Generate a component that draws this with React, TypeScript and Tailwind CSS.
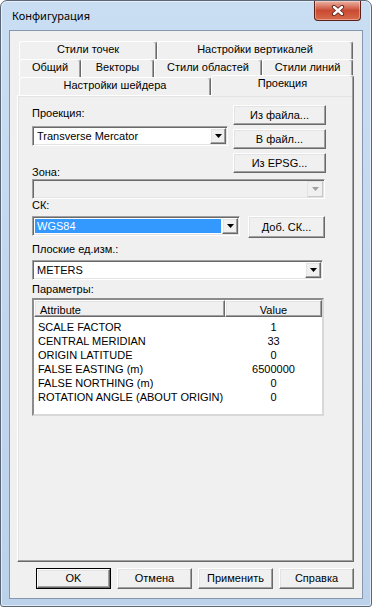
import React from "react";

// classic win32 3d edges
const raised =
  "border border-t-white border-l-white border-r-[#696969] border-b-[#696969] shadow-[inset_-1px_-1px_#a0a0a0,inset_1px_1px_#e3e3e3]";
const sunken =
  "border border-t-[#a0a0a0] border-l-[#a0a0a0] border-r-white border-b-white shadow-[inset_1px_1px_#696969,inset_-1px_-1px_#e3e3e3]";
const tabEdge =
  "border-t border-l border-r border-t-white border-l-white border-r-[#696969] shadow-[inset_-1px_0_#a0a0a0] rounded-t-[3px]";

const params = [
  { name: "SCALE FACTOR", value: "1" },
  { name: "CENTRAL MERIDIAN", value: "33" },
  { name: "ORIGIN LATITUDE", value: "0" },
  { name: "FALSE EASTING (m)", value: "6500000" },
  { name: "FALSE NORTHING (m)", value: "0" },
  { name: "ROTATION ANGLE (ABOUT ORIGIN)", value: "0" },
];

const Tab: React.FC<{ w: string; children: React.ReactNode }> = ({ w, children }) => (
  <div className={`${w} h-[18px] flex justify-center leading-[15px] bg-[#f0f0f0] ${tabEdge}`}>{children}</div>
);

const Btn: React.FC<{ w: string; h?: string; children: React.ReactNode; def?: boolean }> = ({ w, h = "h-[20px]", children, def }) =>
  def ? (
    <div className={`${w} ${h} border border-black flex`}>
      <div className={`flex-1 flex items-center justify-center leading-[13px] bg-[#f0f0f0] ${raised}`}>{children}</div>
    </div>
  ) : (
    <div className={`${w} ${h} flex items-center justify-center leading-[13px] bg-[#f0f0f0] ${raised}`}>{children}</div>
  );

const Arrow: React.FC<{ disabled?: boolean }> = ({ disabled }) => (
  <div
    className={`w-[16px] h-full flex items-center justify-center bg-[#f0f0f0] ${
      disabled ? "border border-t-[#e3e3e3] border-l-[#e3e3e3] border-r-[#c8c8c8] border-b-[#c8c8c8]" : raised
    }`}
  >
    <svg width="7" height="4" viewBox="0 0 7 4">
      <polygon points="0,0 7,0 3.5,4" fill={disabled ? "#a0a0a0" : "#000"} />
    </svg>
  </div>
);

const Combo: React.FC<{ w: string; value?: string; selected?: boolean; disabled?: boolean }> = ({ w, value, selected, disabled }) => (
  <div className={`${w} h-[20px] flex p-[1px] ${sunken} ${disabled ? "bg-[#f0f0f0]" : "bg-white"}`}>
    <div className="flex-1 flex leading-[13px]">
      {selected ? (
        <span className="flex-1 m-[1px] pl-[2px] flex items-center bg-[#3399ff] text-white">{value}</span>
      ) : (
        <span className="pl-[3px] flex items-center">{value}</span>
      )}
    </div>
    <Arrow disabled={disabled} />
  </div>
);

const Label: React.FC<{ children: React.ReactNode; className?: string }> = ({ children, className = "" }) => (
  <div className={`h-[13px] leading-[13px] ${className}`}>{children}</div>
);

export default function App() {
  return (
    <div className="w-[372px] h-[607px] flex flex-col px-[8px] pb-[7px] border border-[#5b6776] rounded-t-[7px] rounded-b-[3px] bg-linear-to-b from-[#cadef3] via-[#c2d7ee] to-[#bcd2eb] shadow-[inset_0_0_0_1px_rgba(255,255,255,0.55)] text-black font-['Liberation_Sans',Arial,sans-serif] text-[11px]">
      {/* title bar */}
      <div className="h-[29px] flex">
        <div className="pl-[3px] pt-[7px] text-[11px] leading-[16px] text-[#000] font-['Noto_Sans',sans-serif]">Конфигурация</div>
        <div className="ml-auto mr-[2px] w-[47px] h-[20px] rounded-b-[4px] border border-t-0 border-[#5a2118] bg-linear-to-b from-[#eab2a5] via-[#c94a32] to-[#d86a4a] shadow-[inset_0_0_0_1px_rgba(255,255,255,0.35)] flex items-center justify-center">
          <svg width="14" height="11" viewBox="0 0 14 11">
            <path d="M3 2 L11 9 M11 2 L3 9" stroke="#5b241a" strokeWidth="4.2" strokeLinecap="round" />
            <path d="M3 2 L11 9 M11 2 L3 9" stroke="#fff" strokeWidth="2.4" strokeLinecap="round" />
          </svg>
        </div>
      </div>

      {/* client area */}
      <div className="flex-1 flex flex-col border border-[#8497ae] bg-[#f0f0f0] pt-[10px] pl-[7px] pr-[8px] pb-[9px]">
        {/* tabs */}
        <div className="ml-[2px] flex flex-col">
          <div className="flex h-[18px]">
            <Tab w="w-[138px]">Стили точек</Tab>
            <Tab w="w-[196px]">Настройки вертикалей</Tab>
          </div>
          <div className="flex h-[18px]">
            <Tab w="w-[62px]">Общий</Tab>
            <Tab w="w-[73px]">Векторы</Tab>
            <Tab w="w-[108px]">Стили областей</Tab>
            <Tab w="w-[91px]">Стили линий</Tab>
          </div>
          <div className="flex h-[18px]">
            <Tab w="w-[192px]">Настройки шейдера</Tab>
            <div className={`relative z-10 w-[143px] h-[21px] -mt-[2px] flex justify-center leading-[15px] bg-[#f0f0f0] ${tabEdge}`}>Проекция</div>
          </div>
        </div>

        {/* page */}
        <div className={`flex-1 flex flex-col pl-[14px] pt-[9px] bg-[#f0f0f0] ${raised}`}>
          <div className="flex gap-[5px]">
            <div className="w-[196px] flex flex-col">
              <Label className="mt-[2px]">Проекция:</Label>
              <div className="mt-[6px]">
                <Combo w="w-[196px]" value="Transverse Mercator" />
              </div>
              <Label className="mt-[20px]">Зона:</Label>
            </div>
            <div className="w-[93px] flex flex-col gap-[4px]">
              <Btn w="w-[93px]">Из файла...</Btn>
              <Btn w="w-[93px]">В файл...</Btn>
              <Btn w="w-[93px]">Из EPSG...</Btn>
            </div>
          </div>

          <Combo w="w-[293px]" disabled />
          <Label>СК:</Label>

          <div className="mt-[4px] flex gap-[8px]">
            <Combo w="w-[208px]" value="WGS84" selected />
            <Btn w="w-[77px]" h="h-[22px]">Доб. СК...</Btn>
          </div>

          <Label className="mt-[5px]">Плоские ед.изм.:</Label>
          <div className="mt-[4px]">
            <Combo w="w-[291px]" value="METERS" />
          </div>

          <Label className="mt-[3px]">Параметры:</Label>
          <div className="mt-[2px] w-[292px] h-[118px] bg-white border-2 border-t-[#8c8c8c] border-l-[#8c8c8c] border-r-[#d8d8d8] border-b-[#d8d8d8] flex flex-col">
            <div className="h-[17px] flex">
              <div className={`w-[191px] pl-[5px] pt-[3px] leading-[13px] bg-[#f0f0f0] ${raised}`}>Attribute</div>
              <div className={`flex-1 pt-[3px] text-center leading-[13px] bg-[#f0f0f0] ${raised}`}>Value</div>
            </div>
            <div className="pt-[3px] flex flex-col">
              {params.map((p) => (
                <div key={p.name} className="flex h-[14px] leading-[14px]">
                  <div className="w-[191px] pl-[4px]">{p.name}</div>
                  <div className="flex-1 text-center">{p.value}</div>
                </div>
              ))}
            </div>
          </div>
        </div>

        {/* dialog buttons */}
        <div className="mt-[6px] flex justify-end gap-[6px]">
          <Btn w="w-[75px]" h="h-[21px]" def>
            OK
          </Btn>
          <Btn w="w-[75px]" h="h-[21px]">Отмена</Btn>
          <Btn w="w-[75px]" h="h-[21px]">Применить</Btn>
          <Btn w="w-[75px]" h="h-[21px]">Справка</Btn>
        </div>
      </div>
    </div>
  );
}
